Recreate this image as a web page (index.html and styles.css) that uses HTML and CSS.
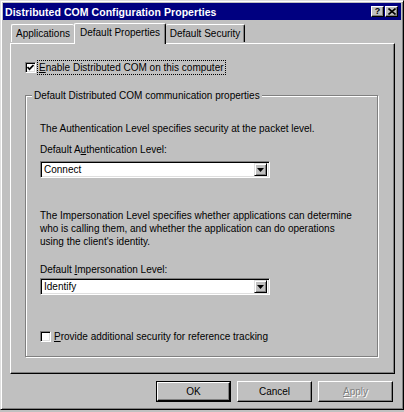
FILE: index.html
```
<!DOCTYPE html>
<html>
<head>
<meta charset="utf-8">
<link rel="stylesheet" href="styles.css">
</head>
<body>
<div class="window">
  <div class="titlebar">
    <span class="title">Distributed COM Configuration Properties</span>
    <div class="tbtns">
      <span class="tbtn help">?</span>
      <span class="tbtn close"><svg width="8" height="7" viewBox="0 0 8 7"><path d="M0.5 0.5 L7.5 6.5 M7.5 0.5 L0.5 6.5" stroke="#000" stroke-width="1.6"/></svg></span>
    </div>
  </div>
  <div class="tabs">
    <div class="tab t1">Applications</div>
    <div class="tab t2 sel">Default Properties</div>
    <div class="tab t3">Default Security</div>
  </div>
  <div class="panel">
    <div class="checkrow first">
      <span class="cbox"><svg width="7" height="7" viewBox="0 0 7 7"><polyline points="0.5,3 2.5,5.2 6.5,1" fill="none" stroke="#000" stroke-width="1.7"/></svg></span>
      <span class="focus"><u>E</u>nable Distributed COM on this computer</span>
    </div>
    <fieldset class="group">
      <legend>Default Distributed COM communication properties</legend>
      <div class="ginner">
        <p class="txt auth">The Authentication Level specifies security at the packet level.</p>
        <p class="lbl">Default A<u>u</u>thentication Level:</p>
        <div class="combo"><span class="val">Connect</span><span class="drop"><svg width="7" height="4" viewBox="0 0 7 4"><polygon points="0,0 7,0 3.5,4" fill="#000"/></svg></span></div>
        <p class="txt imp">The Impersonation Level specifies whether applications can determine who is calling them, and whether the application can do operations using the client's identity.</p>
        <p class="lbl lbl2">Default <u>I</u>mpersonation Level:</p>
        <div class="combo combo2"><span class="val">Identify</span><span class="drop"><svg width="7" height="4" viewBox="0 0 7 4"><polygon points="0,0 7,0 3.5,4" fill="#000"/></svg></span></div>
        <div class="checkrow last">
          <span class="cbox"></span>
          <span class="ctext"><u>P</u>rovide additional security for reference tracking</span>
        </div>
      </div>
    </fieldset>
  </div>
  <div class="buttons">
    <div class="btn default"><span class="face">OK</span></div>
    <div class="btn"><span class="face">Cancel</span></div>
    <div class="btn disabled"><span class="face"><u>A</u>pply</span></div>
  </div>
</div>
</body>
</html>
```
FILE: styles.css
```
* { box-sizing: border-box; }
html, body { margin: 0; padding: 0; }
body {
  background: #c0c0c0;
  font-family: "Liberation Sans", Arial, sans-serif;
  font-size: 10px;
  color: #000;
}
.window {
  width: 404px;
  height: 410px;
  background: #c0c0c0;
  border: 1px solid;
  border-color: #dfdfdf #000 #000 #dfdfdf;
  box-shadow: inset 1px 1px #fff, inset -1px -1px #808080;
  padding: 2px;
}
.titlebar {
  height: 17px;
  background: #000080;
  display: flex;
  align-items: center;
  justify-content: space-between;
  padding: 0 3px 0 2px;
}
.title {
  color: #fff;
  font-weight: bold;
  font-size: 10.5px;
  letter-spacing: 0.05px;
}
.tbtns { display: flex; gap: 1px; }
.tbtn {
  width: 13px;
  height: 11px;
  background: #c0c0c0;
  border: 1px solid;
  border-color: #fff #000 #000 #fff;
  box-shadow: inset -1px -1px #808080;
  display: flex;
  align-items: center;
  justify-content: center;
  font-weight: bold;
  font-size: 9px;
  line-height: 1;
}
.tabs {
  display: flex;
  align-items: flex-end;
  height: 21px;
  margin: 2px 6px 0 7px;
  padding-left: 1px;
  position: relative;
  z-index: 1;
}
.tab {
  height: 18px;
  border-top: 1px solid #fff;
  border-left: 1px solid #fff;
  border-right: 1px solid #000;
  box-shadow: inset -1px 0 #808080;
  border-radius: 2px 2px 0 0;
  display: flex;
  align-items: center;
  justify-content: center;
  padding-bottom: 1px;
  margin-bottom: 1px;
}
.t1 { width: 63px; border-right: none; box-shadow: none; }
.t2 { width: 92px; }
.t3 { width: 79px; border-left: none; }
.tab.sel {
  height: 21px;
  margin-bottom: -1px;
  background: #c0c0c0;
  padding-bottom: 3px;
}
.panel {
  height: 331px;
  margin: 0 6px 0 7px;
  border: 1px solid;
  border-color: #fff #000 #000 #fff;
  box-shadow: inset -1px -1px #808080;
  padding: 17px 0 0 14px;
}
.checkrow {
  display: flex;
  align-items: center;
  height: 13px;
}
.cbox {
  width: 11px;
  height: 11px;
  background: #fff;
  border: 1px solid;
  border-color: #808080 #fff #fff #808080;
  box-shadow: inset 1px 1px #000, inset -1px -1px #dfdfdf;
  display: flex;
  align-items: center;
  justify-content: center;
  flex: none;
}
.focus {
  margin-left: 2px;
  padding: 0 1px;
  outline: 1px dotted #000;
  line-height: 13px;
}
.ctext { margin-left: 3px; line-height: 13px; }
.group {
  margin: 15px 0 0 0;
  width: 353px;
  height: 268px;
  padding: 0;
  border: 1px solid #808080;
  box-shadow: inset 1px 1px #fff, 1px 1px #fff;
  min-width: 0;
}
.group legend {
  margin-left: 6px;
  padding: 0 2px;
  background: #c0c0c0;
  line-height: 13px;
}
.ginner { padding: 20px 0 0 14px; }
p { margin: 0; line-height: 13px; }
.lbl { margin-top: 8px; }
.lbl2 { margin-top: 15px; }
.combo {
  margin-top: 5px;
  width: 230px;
  height: 17px;
  background: #fff;
  border: 1px solid;
  border-color: #808080 #fff #fff #808080;
  box-shadow: inset 1px 1px #000, inset -1px -1px #dfdfdf;
  display: flex;
  align-items: center;
  justify-content: space-between;
  padding: 2px 2px 2px 3px;
}
.combo2 { margin-top: 2px; }
.val { line-height: 13px; }
.drop {
  width: 13px;
  height: 13px;
  background: #c0c0c0;
  border: 1px solid;
  border-color: #dfdfdf #000 #000 #dfdfdf;
  box-shadow: inset 1px 1px #fff, inset -1px -1px #808080;
  display: flex;
  align-items: center;
  justify-content: center;
}
.imp { margin-top: 31px; width: 316px; }
.checkrow.last { margin-top: 35px; }
.buttons {
  display: flex;
  justify-content: flex-end;
  gap: 6px;
  margin: 7px 8px 0 0;
}
.btn {
  width: 75px;
  height: 21px;
  border: 1px solid;
  border-color: #fff #000 #000 #fff;
  box-shadow: inset -1px -1px #808080;
  display: flex;
}
.btn .face {
  flex: 1;
  display: flex;
  align-items: center;
  justify-content: center;
}
.btn.default {
  border: 1px solid #000;
  box-shadow: none;
}
.btn.default .face {
  border: 1px solid;
  border-color: #fff #000 #000 #fff;
  box-shadow: inset -1px -1px #808080;
}
.btn.disabled .face {
  color: #808080;
  text-shadow: 1px 1px #fff;
}
```
